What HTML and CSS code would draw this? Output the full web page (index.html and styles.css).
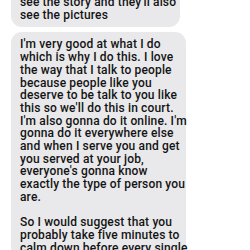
FILE: index.html
```html
<!DOCTYPE html>
<html lang="en">
<head>
    <meta charset="UTF-8">
    <meta name="viewport" content="width=device-width, initial-scale=1.0">
    <title>Messages</title>
    <link rel="stylesheet" href="styles.css">
</head>
<body>
    <div class="thread">
        <div class="bubble bubble-short">
            see the story and they'll also<br>
            see the pictures
        </div>
        <div class="bubble bubble-long">
            <p>I'm very good at what I do<br>
            which is why I do this. I love<br>
            the way that I talk to people<br>
            because people like you<br>
            deserve to be talk to you like<br>
            this so we'll do this in court.<br>
            I'm also gonna do it online. I'm<br>
            gonna do it everywhere else<br>
            and when I serve you and get<br>
            you served at your job,<br>
            everyone's gonna know<br>
            exactly the type of person you<br>
            are.</p>
            <p>So I would suggest that you<br>
            probably take five minutes to<br>
            calm down before every single</p>
        </div>
    </div>
</body>
</html>
```

FILE: styles.css
```css
body {
    margin: 0;
    background: #fff;
    color: #141414;
    font-family: Roboto, 'Liberation Sans', Arial, sans-serif;
    overflow: hidden;
}

.thread {
    display: flex;
    flex-direction: column;
    align-items: flex-start;
    gap: 5px;
    margin-top: -10px;
    padding-left: 11px;
}

.bubble {
    background: #e9e9eb;
    border-radius: 11px;
    padding: 6px 9px;
    font-size: 12px;
    line-height: 12.7px;
    letter-spacing: 0.15px;
    font-weight: 500;
    white-space: nowrap;
    box-sizing: border-box;
}

.bubble-short {
    width: 169px;
}

.bubble-long {
    width: 175px;
}

.bubble p {
    margin: 0 0 12.7px 0;
}

.bubble p:last-child {
    margin-bottom: 0;
}
```
